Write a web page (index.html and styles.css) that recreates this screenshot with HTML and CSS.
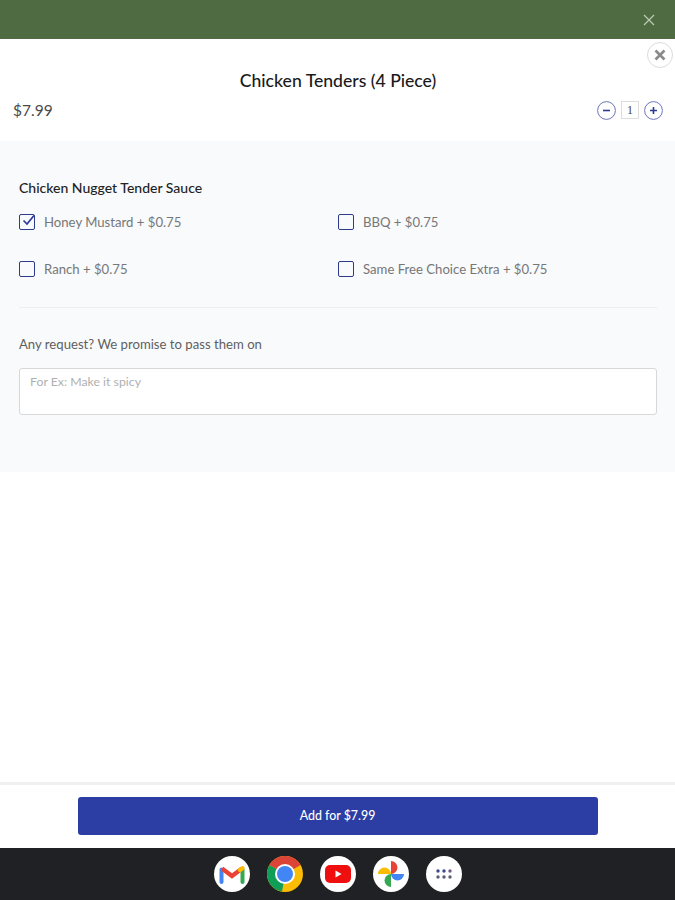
FILE: index.html
```html
<!DOCTYPE html>
<html lang="en">
<head>
<meta charset="utf-8">
<title>Chicken Tenders</title>
<link rel="stylesheet" href="styles.css">
</head>
<body>
<div class="app">
  <div class="topbar">
    <svg class="topbar-x" width="12" height="12" viewBox="0 0 12 12"><path d="M1 1l10 10M11 1L1 11" stroke="#b9c8b0" stroke-width="1.3" fill="none"/></svg>
  </div>
  <header class="head">
    <button class="close" aria-label="Close">
      <svg width="12" height="12" viewBox="0 0 12 12"><path d="M1.5 1.5l9 9M10.5 1.5l-9 9" stroke="#8a8a8a" stroke-width="2.6" fill="none"/></svg>
    </button>
    <h1 class="title">Chicken Tenders (4 Piece)</h1>
    <div class="price-row">
      <span class="price">$7.99</span>
      <div class="qty">
        <span class="qty-btn"><svg width="19" height="19" viewBox="0 0 19 19"><circle cx="9.5" cy="9.5" r="8.9" fill="none" stroke="#6c74b8" stroke-width="1"/><path d="M6 9.500h7" stroke="#2b3a8f" stroke-width="1.600"/></svg></span>
        <span class="qty-val">1</span>
        <span class="qty-btn"><svg width="19" height="19" viewBox="0 0 19 19"><circle cx="9.5" cy="9.5" r="8.9" fill="none" stroke="#6c74b8" stroke-width="1"/><path d="M6 9.500h7M9.500 6v7" stroke="#2b3a8f" stroke-width="1.600"/></svg></span>
      </div>
    </div>
  </header>
  <section class="panel">
    <h2 class="group-title">Chicken Nugget Tender Sauce</h2>
    <div class="options">
      <label class="option"><span class="box"><svg class="tick" width="18" height="18" viewBox="0 0 18 18"><path d="M4.500 8.500l3.500 3.500 7-8.500" stroke="#2e3a9a" stroke-width="1.700" fill="none"/></svg></span>Honey Mustard + $0.75</label>
      <label class="option"><span class="box"></span>BBQ + $0.75</label>
      <label class="option"><span class="box"></span>Ranch + $0.75</label>
      <label class="option"><span class="box"></span>Same Free Choice Extra + $0.75</label>
    </div>
    <hr class="rule">
    <p class="req-label">Any request? We promise to pass them on</p>
    <div class="req-input">For Ex: Make it spicy</div>
  </section>
  <div class="spacer"></div>
  <footer class="foot">
    <button class="add">Add for $7.99</button>
  </footer>
  <nav class="dock">
    <span class="dock-icon">
      <svg width="26" height="19" viewBox="0 0 26 19"><path d="M2.500 17V4.500" stroke="#4285f4" stroke-width="4" stroke-linecap="round" fill="none"/><path d="M23.500 17V4.500" stroke="#34a853" stroke-width="4" stroke-linecap="round" fill="none"/><path d="M3 3.500l10 7.500 10-7.500" stroke="#ea4335" stroke-width="4.200" fill="none"/><path d="M21 5l2.500-1.800" stroke="#fbbc04" stroke-width="4.200" stroke-linecap="round" fill="none"/></svg>
    </span>
    <span class="dock-icon chrome">
      <svg width="36" height="36" viewBox="0 0 36 36"><circle cx="18" cy="18" r="18" fill="#fbbc04"/><path d="M18 18L2.400 9A18 18 0 0 1 33.600 9z" fill="#db4437"/><path d="M18 18L2.400 9A18 18 0 0 0 15 35.750z" fill="#0f9d58"/><circle cx="18" cy="18" r="10" fill="#fff"/><circle cx="18" cy="18" r="8" fill="#4285f4"/></svg>
    </span>
    <span class="dock-icon">
      <svg width="26" height="18" viewBox="0 0 26 18"><rect width="26" height="18" rx="5" fill="#f00f0f"/><path d="M10.500 5.500v7l6-3.500z" fill="#fff"/></svg>
    </span>
    <span class="dock-icon">
      <svg width="28" height="26" viewBox="0 0 26 26"><path d="M13 13H0a6.500 6.500 0 0 1 13 0z" fill="#fbbc04"/><path d="M13 13V0a6.500 6.500 0 0 1 0 13z" fill="#ea4335"/><path d="M13 13h13a6.500 6.500 0 0 1-13 0z" fill="#4285f4"/><path d="M13 13v13a6.500 6.500 0 0 1 0-13z" fill="#34a853"/></svg>
    </span>
    <span class="dock-icon">
      <svg width="16" height="10" viewBox="0 0 16 10"><g fill="#3c4a8c"><circle cx="2" cy="2" r="1.700"/><circle cx="8" cy="2" r="1.700"/><circle cx="14" cy="2" r="1.700" fill="#6f5b86"/></g><g fill="#5a5f78"><circle cx="2" cy="8" r="1.700"/><circle cx="8" cy="8" r="1.700"/><circle cx="14" cy="8" r="1.700"/></g></svg>
    </span>
  </nav>
</div>
</body>
</html>
```

FILE: styles.css
```css
* { box-sizing: border-box; }
html, body { margin: 0; padding: 0; }
body { font-family: Lato, "Liberation Sans", sans-serif; background: #fff; }
.app { width: 675px; height: 900px; display: flex; flex-direction: column; position: relative; overflow: hidden; }
.topbar { height: 39px; flex: none; background: #4f6b42; display: flex; align-items: center; justify-content: flex-end; padding-right: 20px; }
.head { height: 102px; flex: none; background: #fff; position: relative; padding: 30px 12px 0 13px; }
.close { position: absolute; top: 3px; right: 2px; width: 26px; height: 26px; padding: 0; border-radius: 50%; border: 1.500px solid #dcdcdc; background: #fff; display: flex; align-items: center; justify-content: center; }
.title { margin: 0; text-align: center; font-size: 17.600px; line-height: 24px; font-weight: 500; color: #1a1a1a; }
.price-row { display: flex; align-items: center; justify-content: space-between; margin-top: 5px; height: 24px; }
.price { font-size: 15.500px; color: #4a4a4a; }
.qty { display: flex; align-items: center; gap: 5px; }
.qty-btn { display: flex; width: 19px; height: 19px; }
.qty-val { width: 18px; height: 18px; border: 1px solid #ddd; font-family: "Liberation Serif", serif; font-size: 12px; line-height: 16px; text-align: center; color: #444; }
.panel { height: 331px; flex: none; background: #f8fafc; padding: 37px 18px 0 19px; }
.group-title { margin: 0; font-size: 14px; line-height: 20px; font-weight: 500; color: #222; }
.options { display: grid; grid-template-columns: 319px 1fr; grid-auto-rows: 47px; margin-top: 16px; }
.option { display: flex; align-items: flex-start; gap: 9px; font-size: 13.150px; line-height: 17px; color: #777; }
.box { width: 16px; height: 16px; flex: none; border: 1.500px solid #2e3a8c; border-radius: 2px; position: relative; }
.tick { position: absolute; left: -1.500px; top: -3.500px; }
.rule { border: 0; border-top: 1px solid #eceef0; margin: -1px 0 0; }
.req-label { margin: 27px 0 0; font-size: 13.150px; line-height: 18px; color: #5f5f5f; }
.req-input { margin-top: 15px; height: 47px; background: #fff; border: 1px solid #d8d8d8; border-radius: 3px; padding: 5px 10px; font-size: 12.300px; line-height: 16px; color: #b0b0b0; }
.spacer { flex: 1; background: #fff; }
.foot { height: 66px; flex: none; background: #fff; border-top: 3px solid #f0f0f0; display: flex; justify-content: center; padding-top: 12px; }
.add { width: 520px; height: 38px; border: 0; border-radius: 3px; background: #2c3ea3; color: #fff; font-family: inherit; font-size: 12.400px; font-weight: 500; padding: 0 0 2px; }
.dock { height: 52px; flex: none; background: #202124; display: flex; align-items: center; justify-content: center; gap: 17px; }
.dock-icon { width: 36px; height: 36px; border-radius: 50%; background: #fff; display: flex; align-items: center; justify-content: center; }
.chrome { background: transparent; }
```
